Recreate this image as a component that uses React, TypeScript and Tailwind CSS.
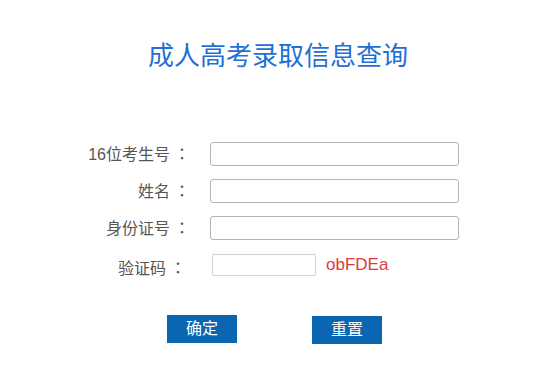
import { useState } from "react";

const FONT = {
	fontFamily: '"Liberation Sans", "Noto Sans CJK SC", sans-serif',
};

type Field = { key: string; label: string };

const FIELDS: Field[] = [
	{ key: "ksh", label: "16位考生号" },
	{ key: "xm", label: "姓名" },
	{ key: "sfzh", label: "身份证号" },
];

// full-width colon, centred in its box like the original page font
function Colon() {
	return (
		<span
			className="ml-[4px] inline-block w-[16px] text-center"
			style={{ fontFamily: '"Noto Sans CJK JP", sans-serif' }}
		>
			：
		</span>
	);
}

export default function App() {
	const [values, setValues] = useState<Record<string, string>>({});
	const [code, setCode] = useState("");

	function reset() {
		setValues({});
		setCode("");
	}

	return (
		<div className="min-h-[388px] w-full bg-white" style={FONT}>
			<h1 className="pt-[40px] text-center text-[26px] font-normal leading-[32px] text-[#1f6fd6]">
				成人高考录取信息查询
			</h1>

			<form
				className="mt-[63px] flex flex-col"
				onSubmit={(e) => e.preventDefault()}
			>
				{FIELDS.map((f) => (
					<div key={f.key} className="flex h-[37px] items-center">
						<label className="w-[190px] text-right text-[16px] text-[#555]">
							{f.label}
							<Colon />
						</label>
						<input
							type="text"
							value={values[f.key] ?? ""}
							onChange={(e) =>
								setValues({ ...values, [f.key]: e.target.value })
							}
							className="ml-[20px] h-[24px] w-[249px] rounded-[3px] border border-[#b2b5be] px-1 text-[14px] outline-none"
						/>
					</div>
				))}
				<div className="flex h-[37px] items-center">
					<label className="mt-[6px] w-[186px] text-right text-[16px] text-[#555]">
						验证码
						<Colon />
					</label>
					<input
						type="text"
						value={code}
						onChange={(e) => setCode(e.target.value)}
						className="ml-[26px] h-[22px] w-[104px] rounded-[2px] border border-[#cfd0d4] px-1 text-[14px] outline-none"
					/>
					<span className="ml-[10px] text-[17px] text-[#e0383e]">obFDEa</span>
				</div>

				<div className="mt-[32px] flex gap-[75px] pl-[167px]">
					<button
						type="submit"
						className="h-[28px] w-[70px] bg-[#0a66b0] text-[16px] text-white"
					>
						确定
					</button>
					<button
						type="button"
						onClick={reset}
						className="mt-px h-[28px] w-[70px] bg-[#0a66b0] text-[16px] text-white"
					>
						重置
					</button>
				</div>
			</form>
		</div>
	);
}
